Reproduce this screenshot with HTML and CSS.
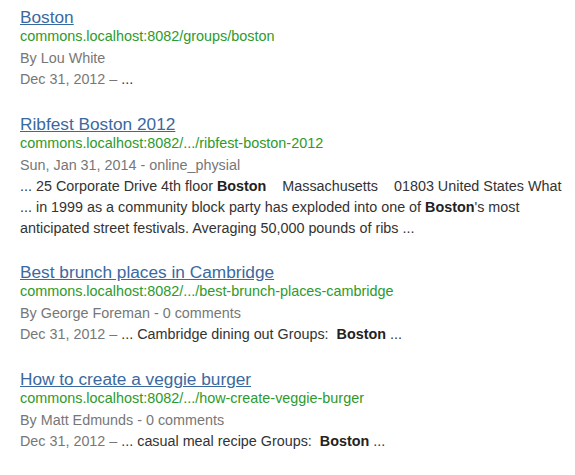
FILE: index.html
```html
<!DOCTYPE html>
<html>
<head>
<meta charset="utf-8">
<link rel="stylesheet" href="styles.css">
</head>
<body>
<ol class="results">
  <li class="result">
    <a class="title" href="#">Boston</a>
    <div class="url">commons.localhost:8082/groups/boston</div>
    <div class="meta">By Lou White</div>
    <div class="snippet"><span class="date">Dec 31, 2012 – </span>...</div>
  </li>
  <li class="result">
    <a class="title" href="#">Ribfest Boston 2012</a>
    <div class="url">commons.localhost:8082/.../ribfest-boston-2012</div>
    <div class="meta">Sun, Jan 31, 2014 - online_physial</div>
    <div class="snippet">... 25 Corporate Drive 4th floor <b>Boston</b><span class="gap">Massachusetts</span><span class="gap">01803 United States What</span><br>... in 1999 as a community block party has exploded into one of <b>Boston</b>'s most<br>anticipated street festivals. Averaging 50,000 pounds of ribs ...</div>
  </li>
  <li class="result">
    <a class="title" href="#">Best brunch places in Cambridge</a>
    <div class="url">commons.localhost:8082/.../best-brunch-places-cambridge</div>
    <div class="meta">By George Foreman - 0 comments</div>
    <div class="snippet"><span class="date">Dec 31, 2012 – </span>... Cambridge dining out Groups: <b class="gap-s">Boston</b> ...</div>
  </li>
  <li class="result">
    <a class="title" href="#">How to create a veggie burger</a>
    <div class="url">commons.localhost:8082/.../how-create-veggie-burger</div>
    <div class="meta">By Matt Edmunds - 0 comments</div>
    <div class="snippet"><span class="date">Dec 31, 2012 – </span>... casual meal recipe Groups: <b class="gap-s">Boston</b> ...</div>
  </li>
</ol>
</body>
</html>
```

FILE: styles.css
```css
html, body {
  margin: 0;
  padding: 0;
  background: #fff;
}
body {
  font-family: "Liberation Sans", Arial, Helvetica, sans-serif;
  color: #333;
}
.results {
  list-style: none;
  margin: 0;
  padding: 7px 0 0 20px;
}
.result {
  margin-bottom: 23.7px;
}
.title {
  display: block;
  font-size: 17.25px;
  line-height: 20px;
  color: #3a69a0;
  text-decoration: underline;
}
.url {
  font-size: 14.4px;
  line-height: 19px;
  color: #2c9a2c;
}
.meta {
  font-size: 14.35px;
  line-height: 21px;
  color: #777;
  margin-top: 2px;
}
.snippet {
  font-size: 14.35px;
  line-height: 21px;
  color: #333;
  white-space: nowrap;
}
.snippet b {
  color: #222;
}
.gap {
  margin-left: 16px;
}
.gap-s {
  margin-left: 4px;
}
.date {
  color: #777;
}
```
